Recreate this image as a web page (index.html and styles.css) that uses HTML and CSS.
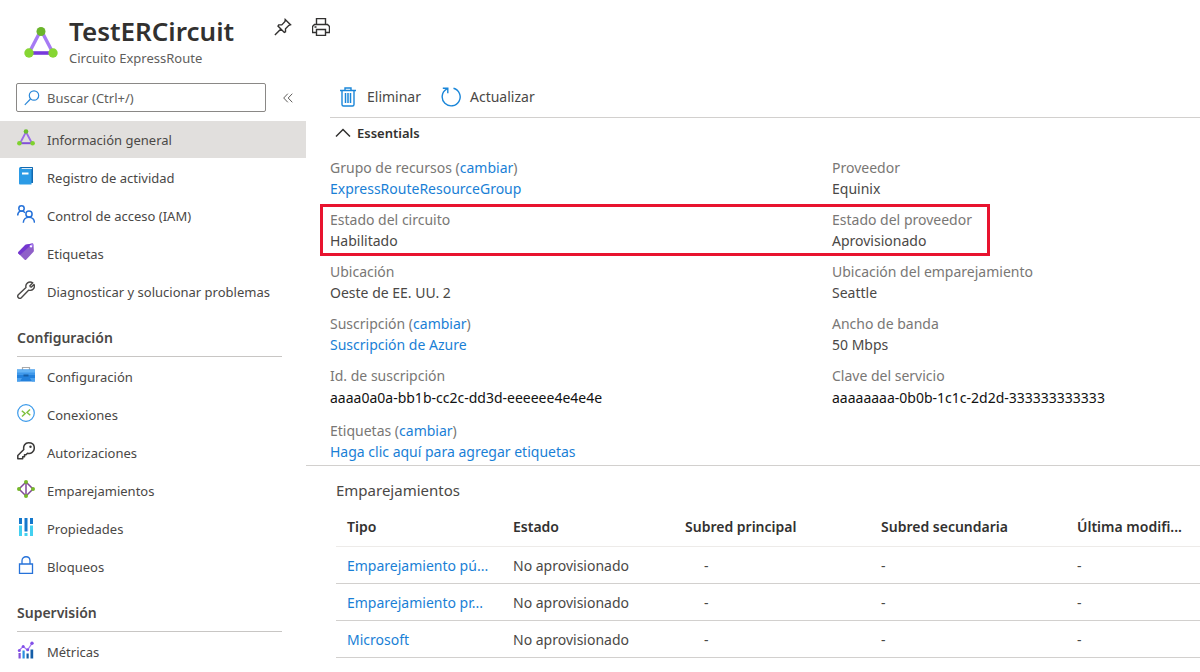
FILE: index.html
```html
<!DOCTYPE html>
<html lang="es">
<head>
<meta charset="utf-8">
<title>TestERCircuit</title>
<link rel="stylesheet" href="styles.css">
</head>
<body>
<header class="page-header">
  <svg class="logo" viewBox="0 0 36 36" aria-hidden="true">
    <path d="M18 5 6 28" stroke="#a67af4" stroke-width="3.4"/><path d="M18 5 30 28" stroke="#a67af4" stroke-width="3.4"/>
    <path d="M6 28h24" stroke="#773adc" stroke-width="3.6"/>
    <circle cx="18" cy="6.500" r="4.500" fill="#6bb52b"/><circle cx="6" cy="28" r="4.700" fill="#86d633"/><circle cx="30" cy="28" r="4.700" fill="#86d633"/>
  </svg>
  <div class="heading">
    <h1>TestERCircuit</h1>
    <p>Circuito ExpressRoute</p>
  </div>
  <div class="header-actions">
    <button type="button" aria-label="Anclar">
      <svg viewBox="0 0 18 18" class="ink"><path d="m11.200 1.500 5.300 5.300-1.600.5-3.400 3.400v3.100l-1.200.6-6.300-6.300.7-1.200h3.100l3.200-3.400zM6.900 10.900.9 17"/></svg>
    </button>
    <button type="button" aria-label="Imprimir">
      <svg viewBox="0 0 18 18" class="ink"><path d="M4.500 6.500v-6h9v6M4.500 14.500h-4v-6l2-2h13l2 2v6h-4M4.500 11.500h9v6h-9zM2.500 9h2"/></svg>
    </button>
  </div>
</header>

<div class="layout">
  <nav class="sidebar" aria-label="Menú del recurso">
    <div class="search-row">
      <label class="search">
        <svg viewBox="0 0 16 16" aria-hidden="true"><g fill="none" stroke="#2b88d8" stroke-width="1.200"><circle cx="10" cy="5.500" r="4.700"/><path d="M6.500 9 .8 14.800"/></g></svg>
        <input type="text" placeholder="Buscar (Ctrl+/)" aria-label="Buscar">
      </label>
      <button type="button" class="collapse" aria-label="Contraer"><svg viewBox="0 0 10 10"><path d="M4.800.7.700 5l4.100 4.300M9.300.7 5.200 5l4.100 4.300" fill="none" stroke="#605e5c"/></svg></button>
    </div>
    <ul class="menu">
      <li><a href="#" class="item active" aria-current="page">
        <svg viewBox="0 0 18 18"><path d="M9 3 3 14.200M9 3l6 11.200" stroke="#9b6bea" stroke-width="1.800"/><path d="M3 14.200h12" stroke="#8250d8" stroke-width="2"/><circle cx="9" cy="2.500" r="2.300" fill="#6bbd2b"/><circle cx="2.400" cy="14.300" r="2.300" fill="#7fd22f"/><circle cx="15.600" cy="14.300" r="2.300" fill="#7fd22f"/></svg>
        Información general</a></li>
      <li><a href="#" class="item">
        <svg viewBox="0 0 18 18"><path d="M3 0h12.500q.5 0 .5.500v15q0 .5-.5.500H3z" fill="#1269b0"/><path d="M4.500 1H15v1H4.500z" fill="#dcecf8"/><path d="M3.500 0A1.500 1.500 0 0 0 2 1.500v15q0 1 1 1h11.500V2H4z" fill="#2b9be6"/><path d="M5 5.500h6.500v2H5z" fill="#fff"/></svg>
        Registro de actividad</a></li>
      <li><a href="#" class="item">
        <svg viewBox="0 0 18 18"><g fill="none" stroke="#2672d9" stroke-width="1.500"><circle cx="4.500" cy="3.500" r="2.700"/><path d="M.7 10.500c0-5 5-5.700 7.300-2.800"/><circle cx="12" cy="9" r="3.100"/><path d="M6.300 17.800c.2-7.500 11-7.500 11.200 0"/></g></svg>
        Control de acceso (IAM)</a></li>
      <li><a href="#" class="item">
        <svg viewBox="0 0 18 18"><path d="M8.500 1.800 15 .4q1.300-.2 1.500 1.100l.4 6.200q0 .8-.6 1.400l-7.200 7.600q-.7.700-1.400 0L1.400 10.400q-.6-.8 0-1.500z" fill="#8f5fc8"/><path d="M8.500 1.800 1.400 8.900q-.6.700 0 1.500l1.600 1.700L15.600.4z" fill="#7436d0"/><path d="m12 3 3-2.300 1.600 1.600-2.400 3z" fill="#a67af4"/><circle cx="14" cy="3.300" r="1.100" fill="#fff"/></svg>
        Etiquetas</a></li>
      <li><a href="#" class="item">
        <svg viewBox="0 0 18 18"><path d="M15.800 1.800 12.900 4.700l.3 1.200 1.200.2 2.600-2.700c1.400 3.700-1.600 6.800-5.200 5.700l-7.500 7.700c-2 1.700-4.700-.8-3-3L9 6.500C8 2.700 11.900-.6 15.800 1.800z" fill="none" stroke="#4a4846" stroke-width="1.400" stroke-linejoin="round"/></svg>
        Diagnosticar y solucionar problemas</a></li>
    </ul>
    <h2>Configuración</h2>
    <ul class="menu">
      <li><a href="#" class="item">
        <svg viewBox="0 0 18 18"><path d="M5.500 4V1.500h7V4" fill="none" stroke="#a9a9a9" stroke-width="1.200"/><path d="M0 3.500h18v12H0z" fill="#2381dc"/><path d="M0 3.500h18v5H0z" fill="#63b3f5"/><path d="M0 6.500h18v2H0z" fill="#3f98ea"/><path d="M6.500 8.500h5v2h-5z" fill="#155ea8"/><path d="M0 12h5l-2 3.500H0zM13 12h5v3.500h-3z" fill="#4ba1ee"/></svg>
        Configuración</a></li>
      <li><a href="#" class="item">
        <svg viewBox="0 0 18 18"><g fill="none"><circle cx="9" cy="9" r="8.300" stroke="#3b9aea" stroke-width="1.200"/><path d="m4.800 6.800 3.400 2.800L5 12.600M13 5.400 9.900 8.400l3.400 2.900" stroke="#7fc241" stroke-width="1.400"/></g></svg>
        Conexiones</a></li>
      <li><a href="#" class="item">
        <svg viewBox="0 0 18 18"><path d="M11.500.8c3.700 0 5.800 2.300 5.800 5.200 0 3.800-3.300 6.200-6.800 5.200L9 12.700H7.500v2H5.700v2H.8v-3.200l6-6C6 3.800 8.200.8 11.500.8z" fill="none" stroke="#3b3a39" stroke-width="1.500" stroke-linejoin="round"/><circle cx="13.500" cy="4.800" r="1.200" fill="#3b3a39"/></svg>
        Autorizaciones</a></li>
      <li><a href="#" class="item">
        <svg viewBox="0 0 18 18"><path d="M9 2 16 9 9 16 2 9zM9 2v14" fill="none" stroke="#804998" stroke-width="1.500"/><g fill="#76b82a"><circle cx="9" cy="2" r="2"/><circle cx="9" cy="16" r="2"/><circle cx="2" cy="9" r="2"/><circle cx="16" cy="9" r="2"/></g></svg>
        Emparejamientos</a></li>
      <li><a href="#" class="item">
        <svg viewBox="0 0 18 18"><path d="M2 0h3v6H2zM7.500 0h3v13.500h-3zM13 0h3v6h-3z" fill="#1478cc"/><path d="M2 7.500h3V18H2zM7.500 15h3v3h-3zM13 7.500h3V18h-3z" fill="#43d0f0"/></svg>
        Propiedades</a></li>
      <li><a href="#" class="item">
        <svg viewBox="0 0 18 18"><path d="M2.500 8h13v9.300h-13zM5 8V4.800C5-.6 13-.6 13 4.800V8" fill="none" stroke="#2672d9" stroke-width="1.300"/></svg>
        Bloqueos</a></li>
    </ul>
    <h2>Supervisión</h2>
    <ul class="menu">
      <li><a href="#" class="item">
        <svg viewBox="0 0 18 18"><path d="M1.500 12h2.200v5.500H1.500z" fill="#8250d8"/><path d="M5.500 9.500h2.200v8H5.500z" fill="#2c8fe0"/><path d="M9.500 12.500h2.200v5H9.500zM13.500 8.500h2.700v9h-2.700z" fill="#155ea8"/><path d="m2.500 9 3.700-3.500L10.500 9 15 2.300" fill="none" stroke="#a67af4" stroke-width="1.200"/><g fill="#8250e8"><circle cx="2.300" cy="9.500" r="1.500"/><circle cx="6.200" cy="5.500" r="1.500"/><circle cx="10.700" cy="8.800" r="1.500"/><circle cx="15" cy="2.300" r="1.700"/></g></svg>
        Métricas</a></li>
    </ul>
  </nav>

  <main class="content">
    <div class="toolbar">
      <button type="button" class="command">
        <svg viewBox="0 0 20 20"><g fill="none" stroke="#1a86d9" stroke-width="1.400"><path d="M2 3.500h16M7 3.500V1h6v2.500M4 3.500v14q0 1.500 1.500 1.500h9q1.500 0 1.500-1.500v-14"/><path d="M7.500 6v10M10 6v10M12.500 6v10" stroke-width="1.500"/></g></svg>
        Eliminar</button>
      <button type="button" class="command">
        <svg viewBox="0 0 20 20"><path d="M12.500 1.200a9 9 0 1 1-7 1L6.600 1.700M1.800 1.200h5v5" fill="none" stroke="#1a86d9" stroke-width="1.400"/></svg>
        Actualizar</button>
    </div>
    <section class="essentials">
      <h2><button type="button" aria-expanded="true"><svg viewBox="0 0 16 10"><path d="m1 8.500 7-7 7 7" fill="none" stroke="#323130" stroke-width="1.500"/></svg>Essentials</button></h2>
      <div class="rows">
        <div class="row">
          <dl><dt>Grupo de recursos (<a href="#">cambiar</a>)</dt><dd><a href="#">ExpressRouteResourceGroup</a></dd></dl>
          <dl><dt>Proveedor</dt><dd>Equinix</dd></dl>
        </div>
        <div class="row marked">
          <dl><dt>Estado del circuito</dt><dd>Habilitado</dd></dl>
          <dl><dt>Estado del proveedor</dt><dd>Aprovisionado</dd></dl>
        </div>
        <div class="row">
          <dl><dt>Ubicación</dt><dd>Oeste de EE. UU. 2</dd></dl>
          <dl><dt>Ubicación del emparejamiento</dt><dd>Seattle</dd></dl>
        </div>
        <div class="row">
          <dl><dt>Suscripción (<a href="#">cambiar</a>)</dt><dd><a href="#">Suscripción de Azure</a></dd></dl>
          <dl><dt>Ancho de banda</dt><dd>50 Mbps</dd></dl>
        </div>
        <div class="row">
          <dl><dt>Id. de suscripción</dt><dd class="guid">aaaa0a0a-bb1b-cc2c-dd3d-eeeeee4e4e4e</dd></dl>
          <dl><dt>Clave del servicio</dt><dd class="guid">aaaaaaaa-0b0b-1c1c-2d2d-333333333333</dd></dl>
        </div>
        <div class="row">
          <dl><dt>Etiquetas (<a href="#">cambiar</a>)</dt><dd><a href="#">Haga clic aquí para agregar etiquetas</a></dd></dl>
        </div>
      </div>
    </section>
    <section class="peerings">
      <h2>Emparejamientos</h2>
      <table>
        <colgroup><col class="c-type"><col class="c-state"><col class="c-net"><col class="c-net"><col class="c-mod"></colgroup>
        <thead><tr><th scope="col">Tipo</th><th scope="col">Estado</th><th scope="col">Subred principal</th><th scope="col">Subred secundaria</th><th scope="col">Última modifi...</th></tr></thead>
        <tbody>
          <tr><td><a href="#">Emparejamiento pú...</a></td><td>No aprovisionado</td><td class="inset">-</td><td>-</td><td>-</td></tr>
          <tr><td><a href="#">Emparejamiento pr...</a></td><td>No aprovisionado</td><td class="inset">-</td><td>-</td><td>-</td></tr>
          <tr><td><a href="#">Microsoft</a></td><td>No aprovisionado</td><td class="inset">-</td><td>-</td><td>-</td></tr>
        </tbody>
      </table>
    </section>
  </main>
</div>
</body>
</html>
```
FILE: styles.css
```css
*, *::before { box-sizing: border-box; }
body {
  margin: 0;
  background: #fff;
  color: #4a4846;
  font: 14px/20px "Noto Sans", "Open Sans", sans-serif;
}
h1, h2, p, ul, dl, dd { margin: 0; padding: 0; }
ul { list-style: none; }
a { color: #1a7fd6; text-decoration: none; }
button {
  padding: 0;
  border: 0;
  background: none;
  color: inherit;
  font: inherit;
  cursor: pointer;
}
svg { display: block; flex: none; }

.page-header {
  display: flex;
  align-items: flex-start;
  height: 78px;
  padding: 15px 23px 0;
}
.logo { width: 36px; height: 36px; margin-top: 10px; }
.heading { margin-left: 10px; }
h1 {
  color: #323130;
  font-size: 26px;
  font-weight: 600;
  line-height: 32px;
}
.heading p { color: #605e5c; font-size: 13px; line-height: 22px; }
.header-actions { display: flex; gap: 20px; margin: 3px 0 0 40px; }
.header-actions svg { width: 18px; height: 18px; }
.ink { fill: none; stroke: #323130; stroke-width: 1.4; }

.layout { display: flex; align-items: stretch; }
.sidebar { flex: none; width: 306px; }
.search-row {
  display: flex;
  align-items: center;
  gap: 17px;
  height: 43px;
  padding: 0 14px 4px 16px;
}
.search {
  display: flex;
  flex: none;
  align-items: center;
  gap: 7px;
  width: 250px;
  height: 29px;
  padding-left: 7px;
  border: 1px solid #8a8886;
  border-radius: 2px;
}
.search svg { width: 16px; height: 16px; }
.search input {
  flex: 1;
  min-width: 0;
  padding: 0;
  border: 0;
  outline: 0;
  background: none;
  font: inherit;
  font-size: 13px;
}
.search input::placeholder { color: #605e5c; opacity: 1; }
.collapse svg { width: 10px; height: 10px; }

.menu { display: flex; flex-direction: column; gap: 1px; }
.item {
  display: flex;
  align-items: center;
  gap: 12px;
  height: 37px;
  padding-left: 17px;
  color: #4a4846;
  font-size: 13px;
}
.item svg { width: 18px; height: 18px; margin-bottom: 3px; }
.item.active { background: #e1dfdd; }
.sidebar h2 {
  margin: 0 24px 1px 17px;
  padding: 18px 0 8px;
  border-bottom: 1px solid #c8c6c4;
  font-size: 14px;
  font-weight: 600;
}

.content { flex: 1; min-width: 0; }
.toolbar {
  display: flex;
  gap: 20px;
  height: 40px;
  margin-left: 24px;
  padding: 0 0 2px 8px;
  border-bottom: 1px solid #d2d0ce;
}
.command { display: flex; align-items: center; gap: 9px; }
.command svg { width: 20px; height: 20px; }

.essentials { padding: 5px 0 3px 24px; border-bottom: 1px solid #d2d0ce; }
.essentials h2 { color: #323130; font-size: 13px; font-weight: 600; line-height: 20px; }
.essentials h2 button { display: flex; align-items: center; gap: 6px; padding-left: 5px; }
.essentials h2 svg { width: 16px; height: 10px; }
.rows { display: flex; flex-direction: column; gap: 10px; margin-top: 14px; }
.row { display: grid; grid-template-columns: 502fr 368fr; position: relative; }
.row dl { line-height: 21px; }
.row dt { color: #797775; }
.row dd { color: #4a4846; }
.row .guid { color: #111; line-height: 24px; }
.marked::before {
  content: "";
  position: absolute;
  top: -5px;
  bottom: -5px;
  left: -10px;
  width: 77%;
  border: 3px solid #e8132f;
  pointer-events: none;
}

.peerings { padding-left: 30px; }
.peerings h2 { padding: 13px 0 8px; font-size: 15px; font-weight: 400; line-height: 22px; }
table { width: 100%; border-collapse: collapse; table-layout: fixed; }
.c-type { width: 166px; }
.c-state { width: 172px; }
.c-net { width: 196px; }
th, td {
  height: 37px;
  padding: 0 0 0 11px;
  border-bottom: 1px solid #d2d0ce;
  text-align: left;
  white-space: nowrap;
}
th { border-color: #edebe9; color: #323130; font-weight: 600; }
td { padding-top: 2px; }
.inset { padding-left: 30px; }
```
